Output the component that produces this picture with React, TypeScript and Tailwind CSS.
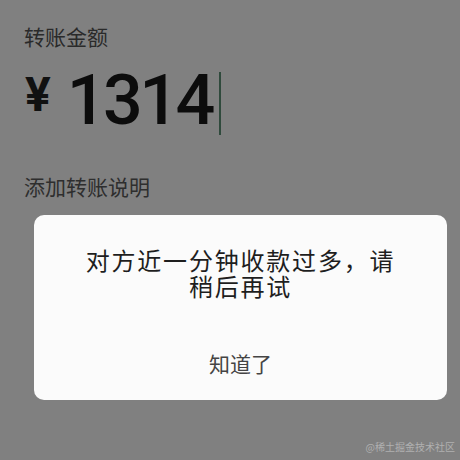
import { useState } from "react";

const cjk = { fontFamily: '"Noto Sans CJK SC", "Noto Sans", sans-serif' };

export default function App() {
    const [open, setOpen] = useState(true);

    return (
        <div className="relative w-[460px] h-[460px] overflow-hidden bg-[#808080]" style={cjk}>
            {/* 转账表单 */}
            <div className="pl-6 pt-[24px]">
                <div className="text-[21px] leading-[24px] text-[#2a2a2a]">转账金额</div>
                <div className="flex items-center mt-[17px] h-[70px]">
                    <span className="text-[48px] font-bold text-[#111] leading-none mr-[16px] mb-[10px] ml-[1px]" style={{ fontFamily: "Roboto, sans-serif" }}>
                        ¥
                    </span>
                    <span className="text-[70px] font-medium leading-none text-[#0c0c0c] tracking-[-3.5px]" style={{ fontFamily: "Roboto, sans-serif" }}>
                        1314
                    </span>
                    <span className="w-[2px] h-[63px] bg-[#2f4a3c] ml-[7px] mt-[6px]" />
                </div>
                <div className="mt-[39px] text-[21px] leading-[24px] text-[#2e2e2e]">添加转账说明</div>
            </div>

            {/* 提示弹窗 */}
            {open && (
                <div className="absolute left-[34px] top-[215px] w-[413px] h-[185px] rounded-[10px] bg-[#fbfbfb] flex flex-col items-center">
                    <p className="mt-[32px] text-center text-[24px] leading-[26px] tracking-[1.8px] text-[#1e1e1e]">
                        对方近一分钟收款过多，请
                        <br />
                        稍后再试
                    </p>
                    <button
                        className="mt-[52px] text-[21px] leading-[24px] text-[#444]"
                        onClick={() => setOpen(false)}
                    >
                        知道了
                    </button>
                </div>
            )}

            <div className="absolute right-[5px] bottom-[8px] text-[10px] leading-none text-[#b0b0b0]">
                @稀土掘金技术社区
            </div>
        </div>
    );
}
